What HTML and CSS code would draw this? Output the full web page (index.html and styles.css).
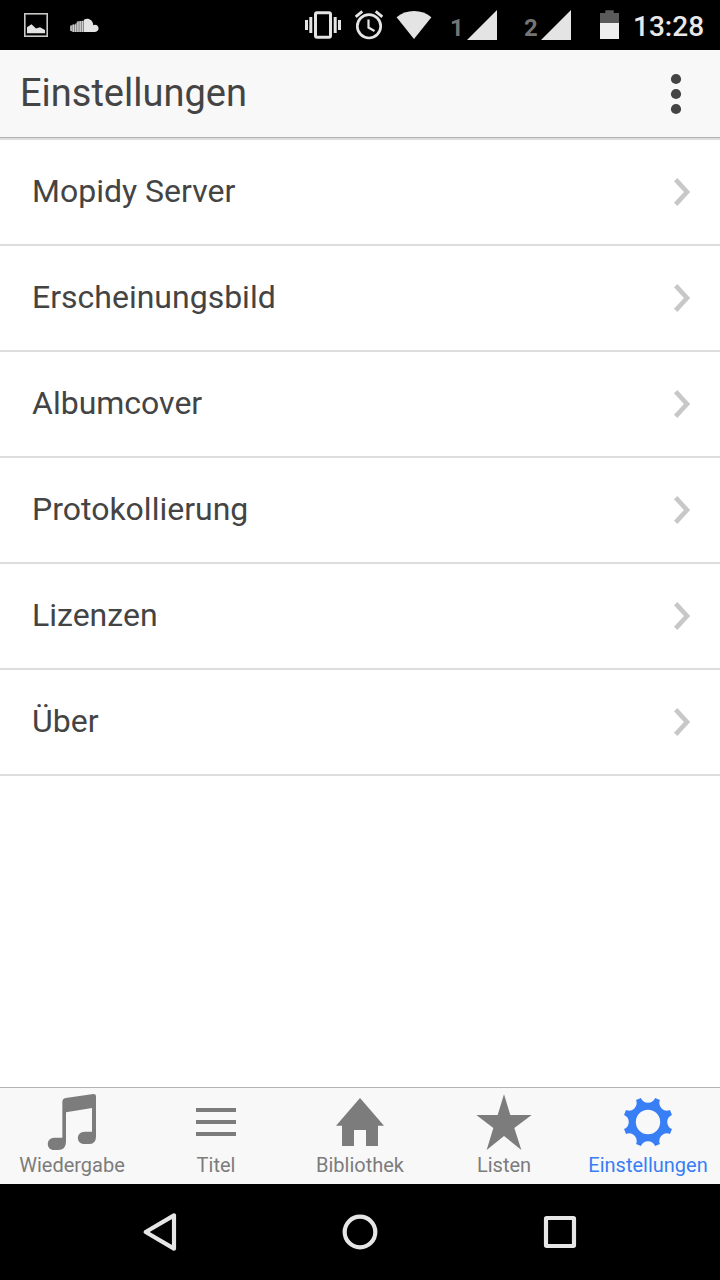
FILE: index.html
```html
<!DOCTYPE html>
<html lang="de">
<head>
    <meta charset="UTF-8">
    <title>Einstellungen</title>
    <link rel="stylesheet" href="styles.css">
</head>
<body>
    <div class="status-bar">
        <svg class="photo" width="24" height="50" viewBox="24 0 24 50">
            <rect x="24.8" y="13.8" width="22.4" height="22.4" fill="none" stroke="#c8c9c5" stroke-width="1.6"/>
            <path d="M27 33.3v-6l4.500-3 4.500 4.200 4-1.300 5 2.800v3.300z" fill="#e4e4e4"/>
        </svg>
        <svg class="cloud" width="29" height="50" viewBox="70 0 29 50">
            <path d="M84 32V19.800C87.500 17.500 92.800 19.300 93.300 25.200A3.600 3.600 0 1 1 95 32z" fill="#e4e4e4"/>
            <path d="M84 20.500l-6.500 1-3 3-3 .5q-2.500 3.500 0 6.500l2 .5H84z" fill="#777"/>
            <path d="M71 25.500v5.500M73.300 24.500V32M75.600 24.500V32M77.900 21.500V32M80.200 21V32M82.500 21V32" stroke="#d0d0d0" stroke-width="1.400"/>
        </svg>
        <svg class="vibrate" width="36" height="50" viewBox="305 0 36 50">
            <rect x="315.500" y="12.800" width="15" height="24.400" rx="1.500" fill="none" stroke="#e4e4e4" stroke-width="3"/>
            <path d="M306.500 20v10M310.800 17v16M335.200 17v16M339.500 20v10" stroke="#e4e4e4" stroke-width="3"/>
        </svg>
        <svg class="alarm" width="28" height="50" viewBox="355 0 28 50">
            <circle cx="369" cy="26.300" r="11.700" fill="none" stroke="#e4e4e4" stroke-width="2.700"/>
            <path d="M368.500 19.500v8l6 3.500" fill="none" stroke="#e4e4e4" stroke-width="2.200"/>
            <path d="M355.700 16.800l6.600-5.500M382.300 16.800l-6.600-5.500" stroke="#e4e4e4" stroke-width="2.800"/>
        </svg>
        <svg class="wifi" width="36" height="50" viewBox="396 0 36 50">
            <path d="M414 39L396.600 17.300Q404 11 414 11t17.400 6.300z" fill="#e4e4e4"/>
        </svg>
        <span class="sim">1</span>
        <svg class="signal" width="30" height="50" viewBox="0 0 30 50"><path d="M30 10v30H0z" fill="#e4e4e4"/></svg>
        <span class="sim second">2</span>
        <svg class="signal" width="30" height="50" viewBox="0 0 30 50"><path d="M30 10v30H0z" fill="#e4e4e4"/></svg>
        <svg class="battery" width="19" height="50" viewBox="600 0 19 50">
            <path d="M600 23V13h5.300v-2.700h8.400V13h5.300v10z" fill="#5a5a5a"/>
            <path d="M600 23h19v16h-19z" fill="#eee"/>
        </svg>
        <span class="clock">13:28</span>
    </div>

    <div class="header">
        <h1>Einstellungen</h1>
        <svg width="12" height="42" viewBox="0 0 12 42" fill="#444">
            <circle cx="6" cy="6" r="5.100"/>
            <circle cx="6" cy="21" r="5.100"/>
            <circle cx="6" cy="36" r="5.100"/>
        </svg>
    </div>

    <ul class="list">
        <li>Mopidy Server<svg class="arrow" viewBox="0 0 48 84"><path d="M5 5l34 37L5 79"/></svg></li>
        <li>Erscheinungsbild<svg class="arrow" viewBox="0 0 48 84"><path d="M5 5l34 37L5 79"/></svg></li>
        <li>Albumcover<svg class="arrow" viewBox="0 0 48 84"><path d="M5 5l34 37L5 79"/></svg></li>
        <li>Protokollierung<svg class="arrow" viewBox="0 0 48 84"><path d="M5 5l34 37L5 79"/></svg></li>
        <li>Lizenzen<svg class="arrow" viewBox="0 0 48 84"><path d="M5 5l34 37L5 79"/></svg></li>
        <li>Über<svg class="arrow" viewBox="0 0 48 84"><path d="M5 5l34 37L5 79"/></svg></li>
    </ul>

    <div class="tabs">
        <div class="tab">
            <svg viewBox="126 36 180 180"><path d="M187 173V66q0-10 10-12l83-12q8 0 8 6v122q0 22-22 22h-12c-27 0-27-37 0-37h22V84l-78 13v88q0 25-24 25h-11c-26 0-26-37 0-37z"/></svg>
            <span>Wiedergabe</span>
        </div>
        <div class="tab">
            <svg viewBox="558 36 180 180"><path d="M588 84h120v12H588zM588 120h120v12H588zM588 156h120v12H588z"/></svg>
            <span>Titel</span>
        </div>
        <div class="tab">
            <svg viewBox="270 36 180 180"><path d="M360 54l72 83h-18v61h-36v-48h-36v48h-36v-61h-18z"/></svg>
            <span>Bibliothek</span>
        </div>
        <div class="tab">
            <svg viewBox="42 36 180 180"><path d="M132 43l19 62h64l-52 39 21 66-52-42-52 42 20-66-51-39h64z"/></svg>
            <span>Listen</span>
        </div>
        <div class="tab active">
            <svg viewBox="-30 -30 60 60">
                <path fill-rule="evenodd" d="M23.970-7.100A7.700 7.700 0 0 0 23.970 7.100L21.970 11.930A7.700 7.700 0 0 0 11.930 21.970L7.100 23.970A7.700 7.700 0 0 0-7.100 23.970L-11.930 21.970A7.700 7.700 0 0 0-21.970 11.930L-23.970 7.100A7.700 7.700 0 0 0-23.970-7.100L-21.970-11.930A7.700 7.700 0 0 0-11.930-21.970L-7.100-23.970A7.700 7.700 0 0 0 7.100-23.970L11.930-21.970A7.700 7.700 0 0 0 21.970-11.930zM12.200 0A12.200 12.200 0 1 0-12.200 0A12.200 12.200 0 1 0 12.200 0z"/>
            </svg>
            <span>Einstellungen</span>
        </div>
    </div>

    <div class="nav">
        <svg viewBox="-60 -60 120 120"><path d="M42-50v100l-85-50z"/></svg>
        <svg viewBox="-60 -60 120 120"><circle r="46"/></svg>
        <svg viewBox="-60 -60 120 120"><rect x="-42" y="-42" width="84" height="84" rx="2"/></svg>
    </div>
</body>
</html>
```

FILE: styles.css
```css
*{
    box-sizing: border-box;
}
body{
    margin: 0;
    height: 1280px;
    display: flex;
    flex-direction: column;
    background-color: #fff;
    color: #444;
    font-family: Roboto, sans-serif;
    overflow: hidden;
}
svg{
    display: block;
    flex: none;
}
.status-bar{
    height: 50px;
    display: flex;
    align-items: center;
    padding: 0 15px 0 24px;
    background-color: #000;
}
.cloud{
    margin-left: 22px;
}
.vibrate{
    margin-left: auto;
}
.alarm{
    margin-left: 14px;
}
.wifi{
    margin-left: 13px;
}
.sim{
    width: 17px;
    margin-left: 18px;
    padding-top: 5px;
    font-size: 24px;
    line-height: 28px;
    font-weight: 700;
    color: #757575;
}
.sim.second{
    margin-left: 27px;
}
.battery{
    margin-left: 29px;
}
.clock{
    width: 72px;
    margin-left: 14px;
    padding-top: 3px;
    font-size: 28px;
    line-height: 34px;
    font-weight: 500;
    color: #e8e8e8;
}
.header{
    height: 88px;
    display: flex;
    align-items: center;
    justify-content: space-between;
    padding: 0 38px 0 20px;
    background-color: #f8f8f8;
    border-bottom: 1px solid #b2b2b2;
}
.header h1{
    margin: 0 0 2px;
    font-size: 38px;
    line-height: 44px;
    font-weight: 400;
}
.list{
    flex: 1;
    margin: 0;
    padding: 0;
    list-style: none;
    border-top: 2px solid #ddd;
}
.list li{
    height: 106px;
    display: flex;
    align-items: center;
    justify-content: space-between;
    padding: 0 30px 2px 32px;
    border-bottom: 2px solid #ddd;
    font-size: 32px;
}
.arrow{
    width: 16px;
    height: 28px;
    margin-top: 2px;
    fill: none;
    stroke: #c8c8c8;
    stroke-width: 14;
    overflow: visible;
}
.tabs{
    height: 97px;
    display: flex;
    background-color: #f8f8f8;
    border-top: 1px solid #b2b2b2;
}
.tab{
    flex: 1;
    display: flex;
    flex-direction: column;
    align-items: center;
    padding-top: 4px;
    font-size: 20px;
    line-height: 24px;
    color: #7c7c7c;
    fill: #7c7c7c;
}
.tab svg{
    width: 60px;
    height: 60px;
    margin-bottom: 1px;
}
.tab.active{
    color: #387ef5;
    fill: #387ef5;
}
.nav{
    height: 96px;
    display: flex;
    align-items: center;
    justify-content: space-between;
    padding: 0 140px;
    background-color: #000;
}
.nav svg{
    width: 40px;
    height: 40px;
    fill: none;
    stroke: #e6e6e6;
    stroke-width: 12.5;
    stroke-linejoin: round;
}
```
